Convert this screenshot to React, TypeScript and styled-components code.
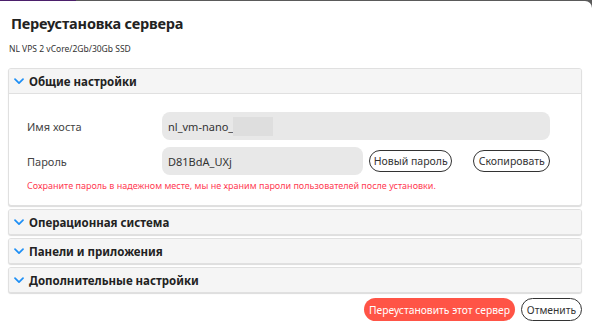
import React from "react";
import styled, { createGlobalStyle } from "styled-components";

const Global = createGlobalStyle`
  html, body { margin: 0; padding: 0; }
  body {
    width: 592px;
    height: 331px;
    overflow: hidden;
    background: linear-gradient(to right, #4b1f6b 0, #4b1f6b 76px, #5a5a5a 76px);
    font-family: "Noto Sans", "Open Sans", sans-serif;
  }
`;

const Modal = styled.div`
  margin-top: 1px;
  height: 330px;
  background: #fff;
  border-radius: 0 7px 0 0;
  padding: 0 10px 0 8px;
  box-sizing: border-box;
  display: flex;
  flex-direction: column;
`;

const Title = styled.h2`
  margin: 0;
  padding: 12px 0 0 3px;
  font-size: 14.5px;
  letter-spacing: -0.2px;
  line-height: 20px;
  font-weight: 700;
  color: #222;
`;

const Subtitle = styled.div`
  margin-top: 9px;
  padding-left: 1px;
  font-size: 8.5px;
  line-height: 13px;
  color: #333;
`;

const List = styled.div`
  margin-top: 13px;
  display: flex;
  flex-direction: column;
  gap: 3px;
`;

const Item = styled.div`
  border: 1px solid #e0e0e0;
  border-radius: 3px;
  box-shadow: 0 1px 1px rgba(0, 0, 0, 0.14);
  background: #fff;
  overflow: hidden;
`;

const Header = styled.div<{ $open?: boolean }>`
  height: ${(p) => (p.$open ? 25 : 24)}px;
  box-sizing: border-box;
  display: flex;
  align-items: center;
  gap: 5px;
  padding-left: 5px;
  background: #f5f5f5;
  border-bottom: ${(p) => (p.$open ? "1px solid #e0e0e0" : "none")};
  font-size: 11.5px;
  font-weight: 700;
  color: #222;
`;

const Body = styled.div`
  padding: 18px 31px 13px 18px;
  display: flex;
  flex-direction: column;
`;

const Row = styled.div<{ $gap?: number }>`
  display: flex;
  align-items: center;
  margin-bottom: ${(p) => p.$gap ?? 0}px;
`;

const Label = styled.div`
  width: 135px;
  flex-shrink: 0;
  font-size: 11px;
  color: #444;
`;

const Field = styled.div<{ $w?: number }>`
  height: 28px;
  ${(p) => (p.$w ? `width: ${p.$w}px;` : "flex: 1;")}
  flex-shrink: 0;
  box-sizing: border-box;
  background: #e8e8e8;
  border-radius: 8px;
  padding-left: 6px;
  display: flex;
  align-items: center;
  font-size: 11px;
  color: #333;
`;

const Blur = styled.span`
  display: inline-block;
  width: 40px;
  height: 19px;
  background: #dedede;
`;

const OutlineBtn = styled.button<{ $ml: number; $w: number }>`
  margin-left: ${(p) => p.$ml}px;
  width: ${(p) => p.$w}px;
  height: 22px;
  border: 1px solid #333;
  border-radius: 11px;
  background: #fff;
  font-family: inherit;
  font-size: 10.5px;
  color: #333;
  padding: 0;
  cursor: pointer;
`;

const Warning = styled.div`
  margin-top: 5px;
  font-size: 9px;
  line-height: 12px;
  color: #ff3b53;
`;

const Footer = styled.div`
  margin-top: 5px;
  display: flex;
  justify-content: flex-end;
  gap: 6px;
`;

const PrimaryBtn = styled.button`
  width: 151px;
  height: 23px;
  border: none;
  border-radius: 12px;
  background: #ff5446;
  color: #fff;
  font-family: inherit;
  font-size: 10.3px;
  padding: 0;
`;

const CancelBtn = styled.button`
  width: 61px;
  height: 23px;
  border: 1px solid #333;
  border-radius: 12px;
  background: #fff;
  color: #333;
  font-family: inherit;
  font-size: 10.3px;
  padding: 0;
`;

const Chevron = () => (
  <svg width="10" height="7" viewBox="0 0 10 7" fill="none">
    <path d="M1 1.2 L5 5.2 L9 1.2" stroke="#1e8ff5" strokeWidth="1.7" strokeLinecap="round" strokeLinejoin="round" />
  </svg>
);

const Section = ({ title, open, children }: { title: string; open?: boolean; children?: React.ReactNode }) => (
  <Item>
    <Header $open={open}>
      <Chevron />
      {title}
    </Header>
    {open && children}
  </Item>
);

export default function App() {
  return (
    <>
      <Global />
      <Modal>
        <Title>Переустановка сервера</Title>
        <Subtitle>NL VPS 2 vCore/2Gb/30Gb SSD</Subtitle>
        <List>
          <Section title="Общие настройки" open>
            <Body>
              <Row $gap={7}>
                <Label>Имя хоста</Label>
                <Field>
                  nl_vm-nano_
                  <Blur />
                </Field>
              </Row>
              <Row>
                <Label>Пароль</Label>
                <Field $w={201}>D81BdA_UXj</Field>
                <OutlineBtn $ml={6} $w={84}>Новый пароль</OutlineBtn>
                <OutlineBtn $ml={21} $w={77}>Скопировать</OutlineBtn>
              </Row>
              <Warning>Сохраните пароль в надежном месте, мы не храним пароли пользователей после установки.</Warning>
            </Body>
          </Section>
          <Section title="Операционная система" />
          <Section title="Панели и приложения" />
          <Section title="Дополнительные настройки" />
        </List>
        <Footer>
          <PrimaryBtn>Переустановить этот сервер</PrimaryBtn>
          <CancelBtn>Отменить</CancelBtn>
        </Footer>
      </Modal>
    </>
  );
}
